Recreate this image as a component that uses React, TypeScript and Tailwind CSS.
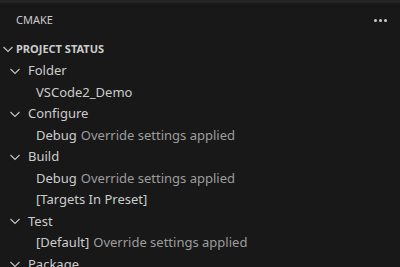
const Chevron = () => (
  <svg width="16" height="16" viewBox="0 0 16 16" className="shrink-0">
    <polyline
      points="3.5,6 8,10.5 12.5,6"
      fill="none"
      stroke="#c5c5c5"
      strokeWidth="1.1"
    />
  </svg>
);

const Group = ({ label }: { label: string }) => (
  <div className="flex h-[21.5px] shrink-0 items-center pl-[7px]">
    <Chevron />
    <span className="ml-[5px] text-[13px] text-[#cccccc]">{label}</span>
  </div>
);

const Leaf = ({ label, desc }: { label: string; desc?: string }) => (
  <div className="flex h-[21.5px] shrink-0 items-center pl-[36px]">
    <span className="text-[13px] text-[#cccccc]">{label}</span>
    {desc && (
      <span className="ml-[4px] text-[13px] text-[#9d9d9d]">{desc}</span>
    )}
  </div>
);

export default function App() {
  return (
    <main
      className="w-[400px] h-[267px] overflow-hidden bg-[#181818] flex flex-col"
      style={{ fontFamily: '"Noto Sans", "Open Sans", sans-serif' }}
    >
      <div className="h-[3px] bg-[#252525] shrink-0" />
      <div className="h-[35px] shrink-0 flex items-center justify-between pl-4 pr-[13px]">
        <span className="text-[11px] text-[#cccccc]">CMAKE</span>
        <span className="flex gap-[2px]">
          <i className="block w-[3px] h-[3px] rounded-full bg-[#cccccc]" />
          <i className="block w-[3px] h-[3px] rounded-full bg-[#cccccc]" />
          <i className="block w-[3px] h-[3px] rounded-full bg-[#cccccc]" />
        </span>
      </div>
      <div className="h-[22px] shrink-0 flex items-center">
        <Chevron />
        <span className="text-[11px] font-bold text-[#cccccc]">
          PROJECT STATUS
        </span>
      </div>
      <Group label="Folder" />
      <Leaf label="VSCode2_Demo" />
      <Group label="Configure" />
      <Leaf label="Debug" desc="Override settings applied" />
      <Group label="Build" />
      <Leaf label="Debug" desc="Override settings applied" />
      <Leaf label="[Targets In Preset]" />
      <Group label="Test" />
      <Leaf label="[Default]" desc="Override settings applied" />
      <Group label="Package" />
    </main>
  );
}
